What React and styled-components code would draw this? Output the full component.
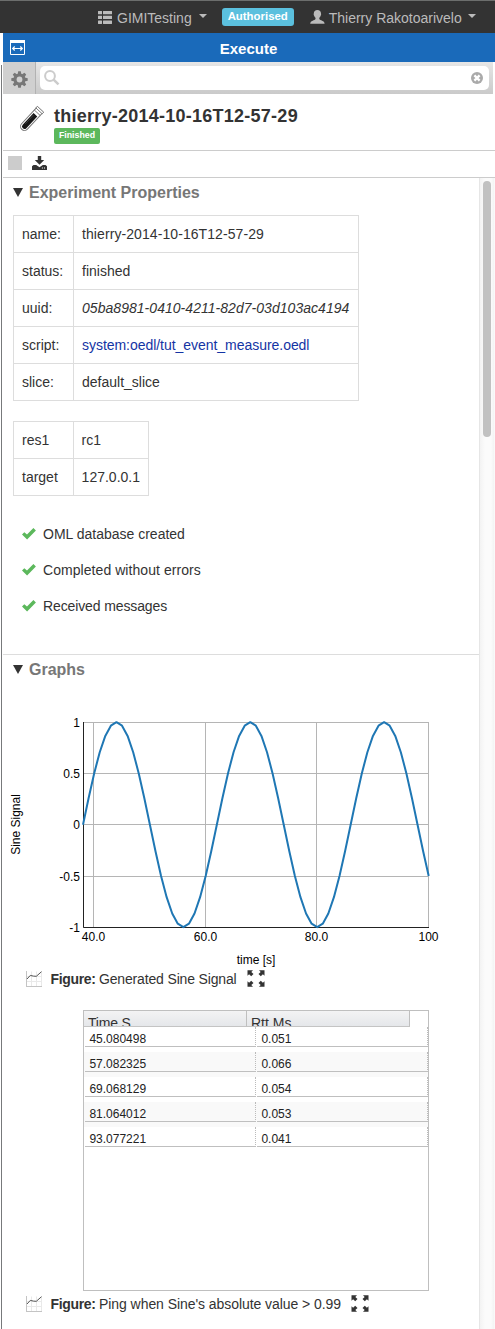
import React from "react";
import styled, { createGlobalStyle } from "styled-components";

const Global = createGlobalStyle`
  *, *::before, *::after { box-sizing: border-box; }
  body {
    margin: 0;
    background: #fff;
    color: #333;
    font: 14px/20px "Liberation Sans", Arial, sans-serif;
  }
  svg { display: block; flex: none; }
`;

const Page = styled.div`
  width: 495px;
  height: 1329px;
  overflow: hidden;
  background: #fff;
`;

const NavBar = styled.header`
  display: flex;
  align-items: center;
  height: 33px;
  padding: 1px 0 0 98px;
  background: #333;
  border-top: 1px solid #6c6e6d;
  color: #bbb;
`;

const NavItem = styled.div`
  display: flex;
  align-items: center;
  gap: ${(p) => p.$gap}px;
`;

const NavText = styled.span`
  white-space: nowrap;
`;

const Caret = styled.i`
  margin: -3px 0 0 ${(p) => p.$left}px;
  border: 4px solid transparent;
  border-top-color: #bbb;
  border-bottom: 0;
`;

const Badge = styled.span`
  width: ${(p) => p.$w}px;
  height: ${(p) => p.$h}px;
  line-height: ${(p) => p.$h - 1}px;
  border-radius: ${(p) => p.$r || 3}px;
  background: ${(p) => p.$bg};
  color: #fff;
  font-size: ${(p) => p.$size}px;
  font-weight: bold;
  text-align: center;
  white-space: nowrap;
`;

const AuthBadge = styled(Badge)`
  margin: -1px 16px 0 15px;
`;

const Panel = styled.main`
  display: flex;
  flex-direction: column;
  height: 1296px;
  margin-left: 1px;
  padding-left: 2px;
  background: linear-gradient(#77797b, #77797b) 0 32px / 1px 100% no-repeat;
`;

const PanelTitle = styled.div`
  display: grid;
  grid-template-columns: 22px 1fr 22px;
  align-items: center;
  height: 29px;
  padding: 0 7px;
  background: #1a6aba;
  color: #fff;
`;

const PanelName = styled.h1`
  margin: 0;
  padding: 2px 1px 0 0;
  font-size: 15px;
  text-align: center;
`;

const SearchRow = styled.div`
  display: flex;
  height: 32px;
  margin-right: 2px;
  background: linear-gradient(#e6e6e6, #cacaca);
`;

const GearButton = styled.div`
  display: flex;
  align-items: center;
  justify-content: center;
  width: 33px;
  padding-top: 2px;
  border-right: 1px solid #b2b2b2;
  background: #d0d0d0;
`;

const SearchField = styled.div`
  display: flex;
  align-items: center;
  justify-content: space-between;
  flex: 1;
  height: 24px;
  margin: 4px 4px 0;
  padding: 0 6px 0 4px;
  border-radius: 5px;
  background: #fff;
`;

const Heading = styled.div`
  display: flex;
  gap: 10px;
  height: 57px;
  padding: 11px 0 0 15px;
  border-bottom: 1px solid #ccc;
`;

const HeadingText = styled.div`
  display: flex;
  flex-direction: column;
`;

const HeadingName = styled.h2`
  margin: 0;
  height: 23px;
  font-size: 18px;
  line-height: 22px;
  letter-spacing: 0.25px;
  white-space: nowrap;
`;

const Actions = styled.div`
  display: flex;
  align-items: center;
  gap: 10px;
  height: 27px;
  padding: 0 5px 2px;
  border-bottom: 1px solid #ccc;
`;

const StopButton = styled.div`
  width: 14px;
  height: 14px;
  background: #ccc;
`;

const ScrollArea = styled.div`
  display: flex;
  flex: 1;
  min-height: 0;
`;

const Content = styled.div`
  width: 476px;
`;

const ScrollTrack = styled.div`
  width: 16px;
  padding: 3px 0 0 3px;
  border-left: 1px solid #e6e6e6;
  background: linear-gradient(90deg, #f3f3f3, #fbfbfb 5px, #fbfbfb 11px, #f3f3f3 14px, #fff 15px);
`;

const ScrollThumb = styled.div`
  width: 8px;
  height: 256px;
  border-radius: 4px;
  background: #c1c1c1;
`;

const Section = styled.section`
  height: ${(p) => p.$h}px;
  padding-left: 10px;
  border-bottom: ${(p) => (p.$line ? "1px solid #ddd" : "0")};
`;

const SectionTitle = styled.h3`
  display: flex;
  align-items: center;
  gap: 5px;
  height: 29px;
  margin: 0;
  color: #777;
  font-size: 16px;
`;

const Triangle = styled.i`
  margin: 0 1px 1px 0;
  border: 5.5px solid transparent;
  border-width: 9px 5.5px 0;
  border-top-color: #333;
`;

const PropTable = styled.table`
  width: ${(p) => p.$w}px;
  margin: ${(p) => p.$top}px 0 0;
  border-collapse: collapse;
  td {
    height: 37px;
    padding: 0 8px;
    border: 1px solid #ddd;
    white-space: nowrap;
  }
  td:first-child { width: 60px; }
`;

const Uuid = styled.em`
  letter-spacing: 0.04px;
`;

const ScriptLink = styled.span`
  color: #1434a4;
  letter-spacing: -0.04px;
`;

const Wide = styled.span`
  letter-spacing: 0.08px;
`;

const CheckList = styled.ul`
  margin: 20px 0 0;
  padding: 0 0 0 9px;
  list-style: none;
`;

const CheckItem = styled.li`
  display: flex;
  align-items: center;
  gap: 7px;
  height: 36px;
  letter-spacing: ${(p) => p.$ls}px;
`;

const ChartBox = styled.div`
  height: 283px;
  margin-left: -10px;
`;

const AxisText = styled.text`
  fill: #000;
  font-size: 12px;
  text-anchor: ${(p) => p.$anchor || "middle"};
`;

const Caption = styled.div`
  display: flex;
  align-items: center;
  height: 21px;
  padding: 2px 0 0 13px;
  white-space: nowrap;
  letter-spacing: ${(p) => p.$ls}px;
`;

const CaptionLabel = styled.b`
  margin: 0 3.5px 0 7.5px;
  letter-spacing: -0.35px;
`;

const CaptionText = styled.span`
  margin-right: 10px;
`;

const DataGrid = styled.div`
  width: 346px;
  height: 281px;
  margin: 22px 0 1px 70px;
  border: 1px solid #bfbfbf;
`;

const GridHead = styled.div`
  display: flex;
  height: 16px;
`;

const GridHeadCell = styled.div`
  width: 163px;
  height: 16px;
  padding: 2px 0 0 4px;
  overflow: hidden;
  border-right: 1px solid #bfbfbf;
  border-bottom: 1px solid #c4c4c4;
  background: linear-gradient(#f3f3f4, #e5e7ea);
  line-height: 20px;
  letter-spacing: ${(p) => p.$ls || 0}px;
  white-space: nowrap;
`;

const GridRow = styled.div`
  display: flex;
  gap: 1px;
  height: 25px;
  padding-left: 1px;
  background: ${(p) => (p.$odd ? "#f9f9f9" : "#fff")};
`;

const GridCell = styled.div`
  width: 171px;
  height: 20px;
  padding-left: 4.4px;
  border-right: 1px dotted #bbb;
  border-bottom: 1px solid #bfbfbf;
  color: #222;
  font-size: 12px;
  line-height: 24px;
`;

const ListIcon = () => (
  <svg width="14" height="13" fill="#bbb">
    {[0, 4.8, 9.6].map((y) => (
      <g key={y}>
        <rect y={y} width="4" height="3.3" rx=".3" />
        <rect x="5" y={y} width="9" height="3.3" rx=".3" />
      </g>
    ))}
  </svg>
);

const UserIcon = () => (
  <svg width="15" height="16" viewBox="0 0 15 16" fill="#bbb">
    <path d="M7.4 0C5.2 0 3.800 1.400 3.800 3.600c0 .5-.2.7-.1 1.200.1.6.5.7.6 1.100.3 1 .9 1.500 1.200 1.900v1.200c-.3.9-1.700 1.200-2.800 1.700C1.300 11.300.2 12 .2 13.700h14.400c0-1.700-1.100-2.400-2.500-3-1.100-.5-2.500-.8-2.800-1.700V7.800c.3-.4.9-.9 1.200-1.900.1-.4.500-.5.6-1.100.1-.5-.1-.7-.1-1.200C11 1.400 9.600 0 7.400 0z" />
  </svg>
);

const WidthIcon = () => (
  <svg width="15" height="15" viewBox="0 0 15 15">
    <path d="M.5.5h14v14H.5z" fill="none" stroke="#fff" />
    <path d="M0 0h15v3H0z" fill="#fff" />
    <path d="M3 8.500h9M4.700 6.500l-2 2 2 2M10.300 6.500l2 2-2 2" fill="none" stroke="#fff" strokeWidth="1.200" />
  </svg>
);

const GearIcon = () => (
  <svg width="17" height="17" viewBox="-8.5 -8.5 17 17">
    {[0, 45, 90, 135].map((a) => (
      <path key={a} d="M-1.300-8.200h2.600l.6 3v10.400l-.6 3h-2.600l-.6-3V-5.200z" transform={`rotate(${a})`} fill="#777" />
    ))}
    <circle r="5.900" fill="#777" />
    <circle r="2.900" fill="#d0d0d0" />
  </svg>
);

const SearchIcon = () => (
  <svg width="16" height="16" viewBox="0 0 16 16" fill="none" stroke="#ccc">
    <circle cx="6" cy="6" r="4.900" strokeWidth="2" />
    <path d="M9.600 9.600l4.900 4.700" strokeWidth="2.500" />
  </svg>
);

const ClearIcon = () => (
  <svg width="12" height="12" viewBox="0 0 12 12">
    <circle cx="6" cy="6" r="6" fill="#aaa" />
    <path d="M3.400 3.400l5.200 5.200M8.600 3.400l-5.200 5.200" stroke="#fff" strokeWidth="2.300" />
  </svg>
);

const TubeIcon = () => (
  <svg width="26" height="28" viewBox="0 -1 26 28">
    <g transform="translate(13 13.500) rotate(43)">
      <path d="M-4-13.500v23a4 4 0 0 0 8 0v-23z" fill="#fff" stroke="#777" strokeWidth="1" />
      <path d="M-4.300-14h8.600v2.200h-8.600zM-4-9.200h8" fill="#fff" stroke="#777" strokeWidth=".9" />
      <path d="M-2.500-6.500v16a2.500 2.500 0 0 0 5 0v-16z" fill="#161616" />
      <path d="M-1.200-5v12" stroke="#555" strokeWidth=".6" />
    </g>
  </svg>
);

const DownloadIcon = () => (
  <svg width="15" height="14" viewBox="0 0 15 14" fill="#333">
    <path d="M5.800 0h3.400v4h3L7.500 8.800 2.800 4h3z" />
    <path fillRule="evenodd" d="M1.500 9h2.700L7.500 11.200 10.800 9h2.700L15 10.300V14H0v-3.700zM9.900 11.500v1h1v-1zM12 11.500v1h1v-1z" />
  </svg>
);

const CheckIcon = () => (
  <svg width="14" height="12" viewBox="0 0 14 12">
    <path d="M0 6.600l2.300-2.300 2.700 2.300L11.400 0l2.500 2.400-8.800 9.200z" fill="#5cb85c" />
  </svg>
);

const FigureIcon = () => (
  <svg width="17" height="17" viewBox="0 -1 17 17" fill="none">
    <path d="M.5 5.500h15M.5 10.500h15M5.500.5v15M10.500.5v15M15.500.5v15" stroke="#e9e9e9" />
    <path d="M.5 0v16M0 15.500h16" stroke="#c4c4c4" />
    <path d="M1 8l3.300-3.600 3.200.7 2.800.2L15.500.7" stroke="#555" strokeWidth="1" />
  </svg>
);

const ExpandIcon = () => (
  <svg width="18" height="17" viewBox="-9 -8.5 18 17" fill="#333">
    {[[1, 1], [-1, 1], [1, -1], [-1, -1]].map(([x, y]) => (
      <path key={`${x}${y}`} d="M8.500-8.300v5.600L6.900-4.200 4.800-2.200 2.500-4.500 4.700-6.500 3-8.300z" transform={`scale(${x} ${y})`} />
    ))}
  </svg>
);

const UNIT = 5.576;
const sinePath = Array.from({ length: 63 }, (_, i) => {
  const x = 83 + i * UNIT;
  const y = 169.7 - 102.5 * Math.sin((2 * Math.PI * i) / 24);
  return `${i ? "L" : "M"}${x.toFixed(2)} ${y.toFixed(2)}`;
}).join("");

const Y_TICKS = [[67.5, "1"], [118.5, "0.5"], [169.5, "0"], [221.5, "-0.5"], [272.5, "-1"]];
const X_TICKS = [[93.5, "40.0"], [205.5, "60.0"], [316.5, "80.0"], [428.5, "100"]];

const SineChart = () => (
  <svg width="476" height="314" viewBox="0 0 476 314">
    <g transform="translate(-3 -29)">
      {Y_TICKS.map(([y, t]) => (
        <g key={t}>
          <path d={`M83 ${y}H429`} stroke="#b5b5b5" />
          <AxisText x="80" y={y + 4} $anchor="end">{t}</AxisText>
        </g>
      ))}
      {X_TICKS.map(([x, t]) => (
        <g key={t}>
          <path d={`M${x} 67V273`} stroke="#b5b5b5" />
          <AxisText x={x} y="286">{t}</AxisText>
        </g>
      ))}
      <path d="M83.500 67V272.500H429" fill="none" stroke="#222" />
      <path d={sinePath} fill="none" stroke="#1f77b4" strokeWidth="2" strokeLinejoin="round" />
      <AxisText x="256" y="309">time [s]</AxisText>
      <AxisText transform="translate(20 169.500) rotate(-90)">Sine Signal</AxisText>
    </g>
  </svg>
);

const Figure = ({ text, ls }) => (
  <Caption $ls={ls}>
    <FigureIcon />
    <CaptionLabel>Figure:</CaptionLabel>
    <CaptionText>{text}</CaptionText>
    <ExpandIcon />
  </Caption>
);

const PROPS = [
  ["name:", <Wide>thierry-2014-10-16T12-57-29</Wide>],
  ["status:", "finished"],
  ["uuid:", <Uuid>05ba8981-0410-4211-82d7-03d103ac4194</Uuid>],
  ["script:", <ScriptLink>system:oedl/tut_event_measure.oedl</ScriptLink>],
  ["slice:", "default_slice"],
];
const RESOURCES = [["res1", "rc1"], ["target", "127.0.0.1"]];
const CHECKS = [
  ["OML database created", 0],
  ["Completed without errors", 0.06],
  ["Received messages", -0.12],
];
const PINGS = [
  ["45.080498", "0.051"],
  ["57.082325", "0.066"],
  ["69.068129", "0.054"],
  ["81.064012", "0.053"],
  ["93.077221", "0.041"],
];

const Properties = ({ rows, width, top }) => (
  <PropTable $w={width} $top={top}>
    <tbody>
      {rows.map(([k, v]) => (
        <tr key={k}>
          <td>{k}</td>
          <td>{v}</td>
        </tr>
      ))}
    </tbody>
  </PropTable>
);

export default function App() {
  return (
    <Page>
      <Global />
      <NavBar>
        <NavItem $gap={5}>
          <ListIcon />
          <NavText>GIMITesting</NavText>
          <Caret $left={2} />
        </NavItem>
        <AuthBadge $w={72} $h={18} $bg="#5bc0de" $size={11.4}>Authorised</AuthBadge>
        <NavItem $gap={4}>
          <UserIcon />
          <NavText>Thierry Rakotoarivelo</NavText>
          <Caret $left={2} />
        </NavItem>
      </NavBar>
      <Panel>
        <PanelTitle>
          <WidthIcon />
          <PanelName>Execute</PanelName>
        </PanelTitle>
        <SearchRow>
          <GearButton><GearIcon /></GearButton>
          <SearchField>
            <SearchIcon />
            <ClearIcon />
          </SearchField>
        </SearchRow>
        <Heading>
          <TubeIcon />
          <HeadingText>
            <HeadingName>thierry-2014-10-16T12-57-29</HeadingName>
            <Badge $w={46} $h={16} $r={2} $bg="#5cb85c" $size={8.8}>Finished</Badge>
          </HeadingText>
        </Heading>
        <Actions>
          <StopButton />
          <DownloadIcon />
        </Actions>
        <ScrollArea>
          <Content>
            <Section $h={477} $line>
              <SectionTitle><Triangle />Experiment Properties</SectionTitle>
              <Properties rows={PROPS} width={346} top={8} />
              <Properties rows={RESOURCES} width={136} top={20} />
              <CheckList>
                {CHECKS.map(([c, ls]) => (
                  <CheckItem key={c} $ls={ls}><CheckIcon />{c}</CheckItem>
                ))}
              </CheckList>
            </Section>
            <Section $h={674}>
              <SectionTitle><Triangle />Graphs</SectionTitle>
              <ChartBox><SineChart /></ChartBox>
              <Figure text="Generated Sine Signal" ls={-0.16} />
              <DataGrid>
                <GridHead>
                  <GridHeadCell $ls={-0.2}>Time S</GridHeadCell>
                  <GridHeadCell>Rtt Ms</GridHeadCell>
                </GridHead>
                {PINGS.map(([t, r], i) => (
                  <GridRow key={t} $odd={i % 2 === 1}>
                    <GridCell>{t}</GridCell>
                    <GridCell>{r}</GridCell>
                  </GridRow>
                ))}
              </DataGrid>
              <Figure text="Ping when Sine's absolute value > 0.99" ls={-0.06} />
            </Section>
          </Content>
          <ScrollTrack><ScrollThumb /></ScrollTrack>
        </ScrollArea>
      </Panel>
    </Page>
  );
}
